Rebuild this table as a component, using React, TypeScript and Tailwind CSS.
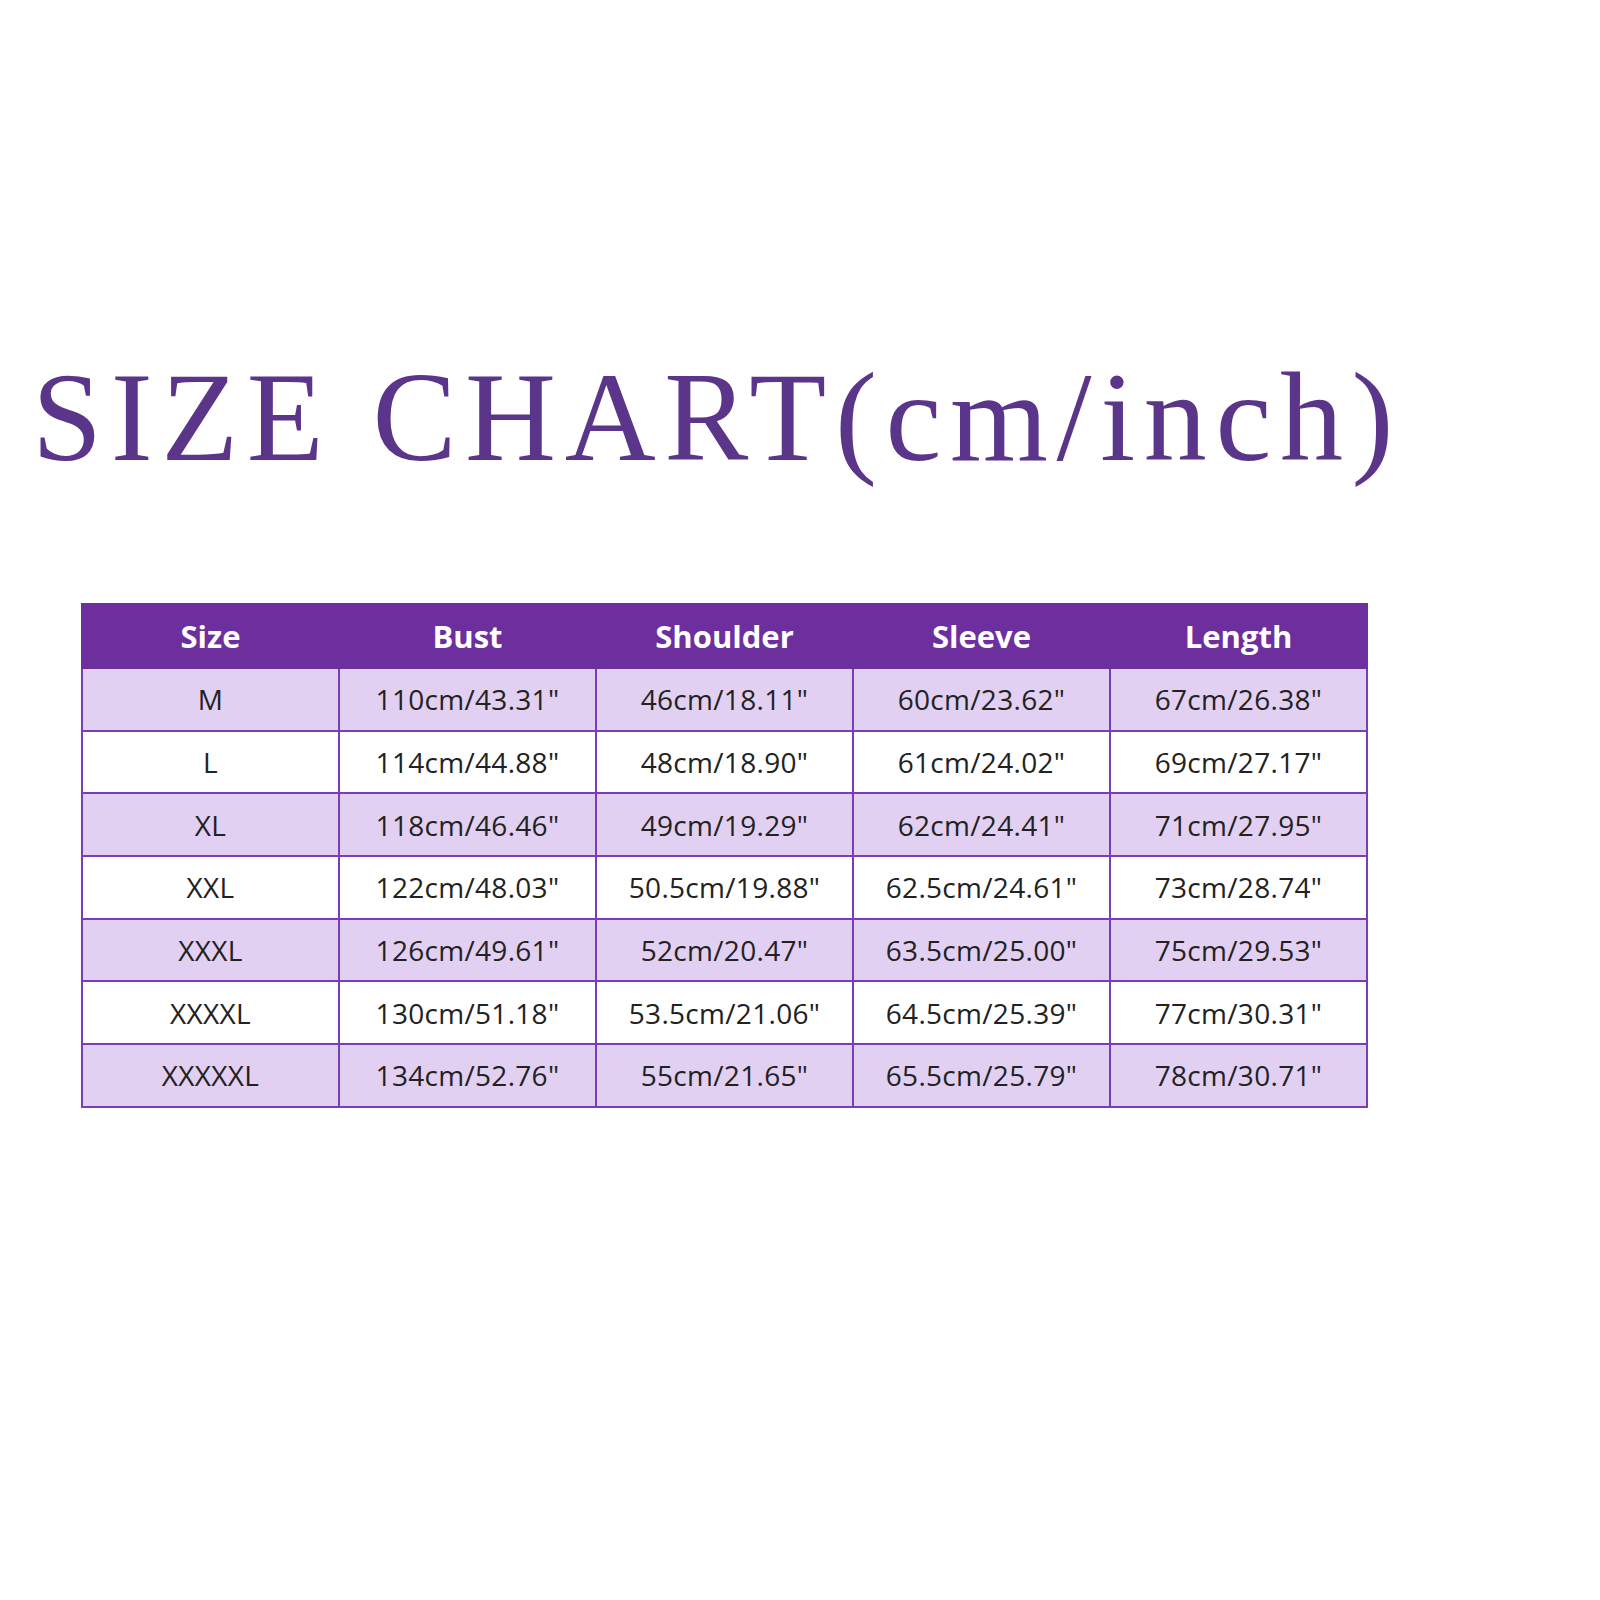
import React from "react";

const headers = ["Size", "Bust", "Shoulder", "Sleeve", "Length"];

const rows: string[][] = [
    ["M", "110cm/43.31\"", "46cm/18.11\"", "60cm/23.62\"", "67cm/26.38\""],
    ["L", "114cm/44.88\"", "48cm/18.90\"", "61cm/24.02\"", "69cm/27.17\""],
    ["XL", "118cm/46.46\"", "49cm/19.29\"", "62cm/24.41\"", "71cm/27.95\""],
    ["XXL", "122cm/48.03\"", "50.5cm/19.88\"", "62.5cm/24.61\"", "73cm/28.74\""],
    ["XXXL", "126cm/49.61\"", "52cm/20.47\"", "63.5cm/25.00\"", "75cm/29.53\""],
    ["XXXXL", "130cm/51.18\"", "53.5cm/21.06\"", "64.5cm/25.39\"", "77cm/30.31\""],
    ["XXXXXL", "134cm/52.76\"", "55cm/21.65\"", "65.5cm/25.79\"", "78cm/30.71\""],
];

export default function App() {
    return (
        <div className="w-[1600px] h-[1600px] bg-white">
            {/* Title */}
            <h1 className="pt-[355px] pl-[32px] text-[126px] leading-none tracking-[8.6px] text-[#5a3589] font-['Liberation_Serif',serif] whitespace-nowrap">
                SIZE CHART(cm/inch)
            </h1>

            {/* Table */}
            <div className="pl-[81px] pt-[122px]">
                <table className="w-[1287px] table-fixed border-collapse font-['Open_Sans',sans-serif]">
                    <thead>
                        <tr className="h-[64px] bg-[#6e2f9e]">
                            {headers.map((h) => (
                                <th
                                    key={h}
                                    className="border-2 border-[#6e2f9e] text-[31px] font-bold text-white text-center"
                                >
                                    {h}
                                </th>
                            ))}
                        </tr>
                    </thead>
                    <tbody>
                        {rows.map((row, i) => (
                            <tr
                                key={row[0]}
                                className={
                                    i % 2 === 0
                                        ? "h-[62.7px] bg-[#e2d0f2]"
                                        : "h-[62.7px] bg-white"
                                }
                            >
                                {row.map((cell, j) => (
                                    <td
                                        key={j}
                                        className="border-2 border-[#7a3db5] text-center text-[28px] tracking-[0.3px] text-[#222222]"
                                    >
                                        {cell}
                                    </td>
                                ))}
                            </tr>
                        ))}
                    </tbody>
                </table>
            </div>
        </div>
    );
}
